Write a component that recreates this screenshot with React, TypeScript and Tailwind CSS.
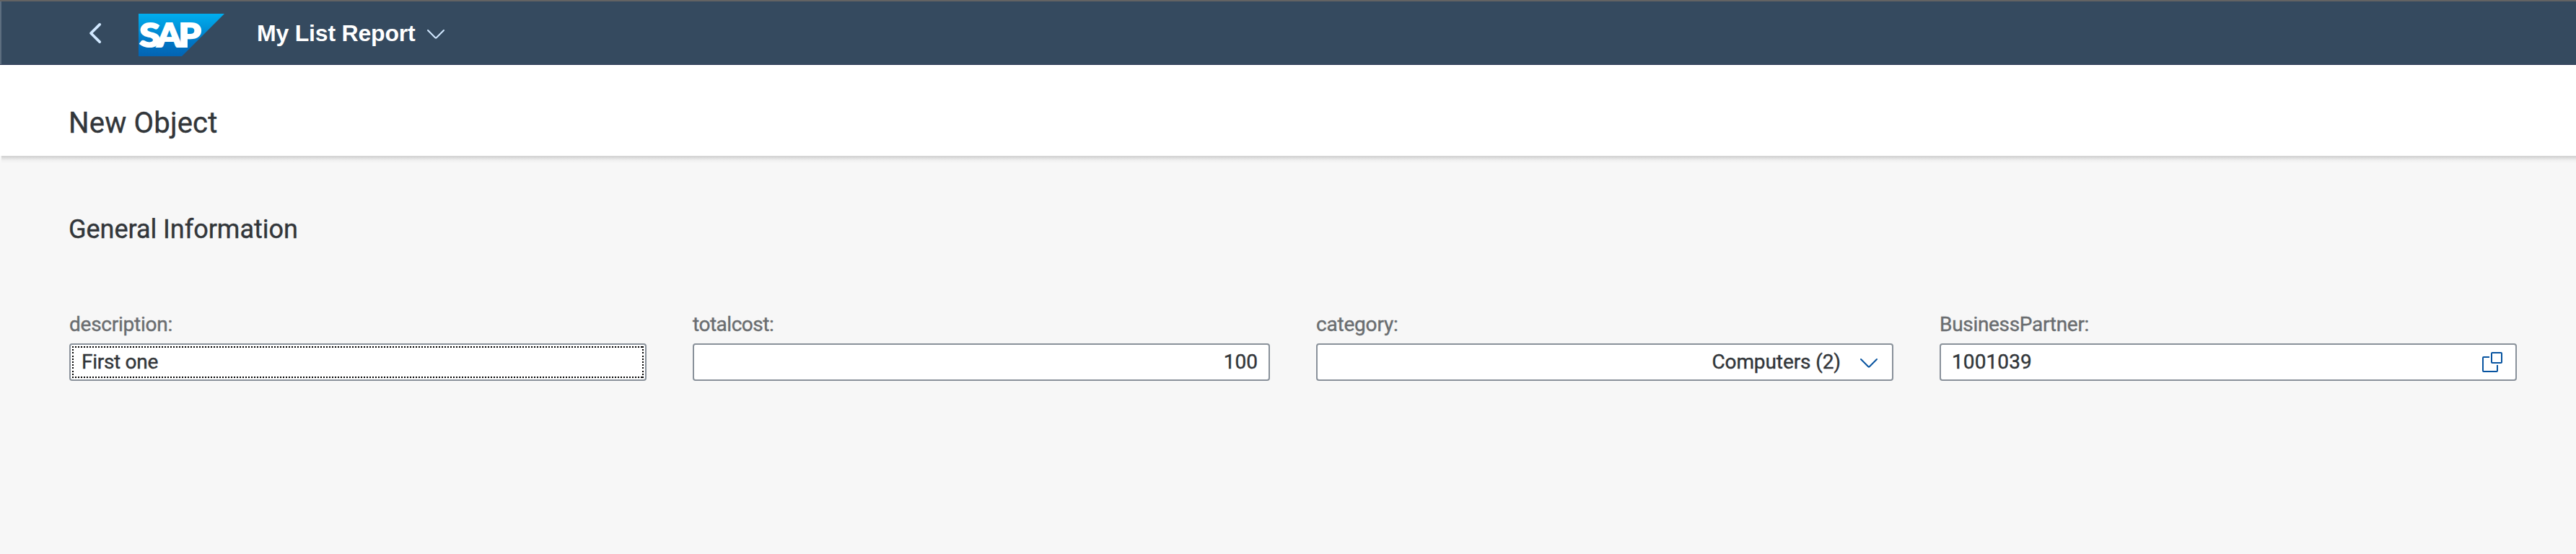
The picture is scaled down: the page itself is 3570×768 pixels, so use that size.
import type { ReactNode } from 'react';

function BackIcon() {
  return (
    <svg className="h-8 w-5" viewBox="0 0 20 32" fill="none" stroke="#d1e8ff" strokeWidth="3.8" strokeLinecap="round" strokeLinejoin="round">
      <path d="M16.2 3.9 4 16l12.2 12.1" />
    </svg>
  );
}

function ChevronDown({ color }: { color: string }) {
  return (
    <svg className="block h-4 w-6" viewBox="0 0 24 16" fill="none" stroke={color} strokeWidth="2" strokeLinecap="round" strokeLinejoin="round">
      <path d="M1 2 11.2 12.3q.8.8 1.6 0L23 2" />
    </svg>
  );
}

function ValueHelpIcon() {
  return (
    <svg className="block size-7" viewBox="0 0 28 28" fill="none" stroke="#0854a0" strokeWidth="2">
      <rect x="13" y="1" width="14" height="14" rx="1" />
      <path d="M10 7H2Q1 7 1 8V26Q1 27 2 27H20Q21 27 21 26V18" />
    </svg>
  );
}

function SapLogo() {
  return (
    <svg className="h-[59px] w-[119px] overflow-visible" viewBox="0 0 119 59">
      <defs>
        <linearGradient id="sap" x1="0" y1="0" x2="0" y2="1">
          <stop offset="0" stopColor="#00aeef" />
          <stop offset="0.3" stopColor="#0097dc" />
          <stop offset="0.65" stopColor="#0076c5" />
          <stop offset="1" stopColor="#0364b3" />
        </linearGradient>
      </defs>
      <path d="M0 0H119L60 59H0Z" fill="url(#sap)" />
      <g fill="#fff" stroke="#fff" strokeWidth="2" fontFamily="Lato, sans-serif" fontWeight="900" fontSize="46">
        <text x="1.2" y="46" textLength="29" lengthAdjust="spacingAndGlyphs">S</text>
        <text x="25.5" y="46" textLength="34" lengthAdjust="spacingAndGlyphs">A</text>
        <text x="55.5" y="46" textLength="31.5" lengthAdjust="spacingAndGlyphs">P</text>
      </g>
    </svg>
  );
}

function FocusOutline() {
  return (
    <svg className="absolute top-0.5 left-0.5 h-11 w-[792px]" viewBox="0 0 792 44" stroke="#000" strokeWidth="2" shapeRendering="crispEdges">
      <path d="M0 1H792M0 43H792" strokeDasharray="2 2" />
      <path d="M1 0V44M791 0V44" strokeDasharray="2 2.2" />
    </svg>
  );
}

function Field({ label, tracking, children }: { label: string; tracking: string; children: ReactNode }) {
  return (
    <div className="flex flex-col gap-2.5">
      <label className={`text-[28px] leading-[33px] text-[#6a6d70] ${tracking}`}>{label}</label>
      <div className="relative flex h-[52px] w-[800px] rounded-[4px] border-2 border-[#89919a] bg-white px-[15px] pt-[7px] text-[28px] leading-[33px]">
        {children}
      </div>
    </div>
  );
}

export default function App() {
  return (
    <div className="flex h-[768px] w-[3570px] flex-col overflow-hidden bg-[#f7f7f7] font-['Roboto','Noto_Sans',sans-serif] text-[#32363a] [-webkit-text-stroke:0.4px]">
      <header className="flex h-[90px] shrink-0 border-t-2 border-b border-t-[#636363] border-b-[#2c3a56] bg-[#354a5f] [-webkit-text-stroke:0]">
        <div className="w-0.5 bg-[#5d6e7f]" />
        <button className="mt-7 ml-[120px] h-8 w-5">
          <BackIcon />
        </button>
        <div className="mt-[17px] ml-[50px]">
          <SapLogo />
        </div>
        <h1 className="mt-[26px] ml-[45px] w-[236px] font-['Liberation_Sans',sans-serif] text-[32px] leading-9 font-bold tracking-[-0.2px] whitespace-nowrap text-white">
          My List Report
        </h1>
        <div className="mt-[38px]">
          <ChevronDown color="#d1e8ff" />
        </div>
      </header>

      <section className="h-[126px] shrink-0 bg-white pt-[57px] pl-[95px]">
        <h2 className="text-[40px] leading-[47px] tracking-[0.2px]">New Object</h2>
      </section>
      <div className="ml-0.5 h-0.5 shrink-0 bg-[#d5d5d5]" />
      <div className="ml-0.5 h-2 shrink-0 bg-linear-to-b from-[#d8d8d8] via-[#efefef] via-50% to-[#f7f7f7]" />

      <main className="px-24 pt-[71px]">
        <h3 className="-ml-px text-[36px] leading-[42px] tracking-[-0.03px]">General Information</h3>
        <div className="mt-[94px] flex gap-16">
          <Field label="description:" tracking="tracking-[-0.25px]">
            <FocusOutline />
            <span className="tracking-[-0.29px]">First one</span>
          </Field>
          <Field label="totalcost:" tracking="tracking-[-0.48px]">
            <span className="ml-auto">100</span>
          </Field>
          <Field label="category:" tracking="tracking-[-0.2px]">
            <span className="ml-auto tracking-[-0.1px]">Computers (2)</span>
            <span className="mt-[11px] mr-[5px] ml-[27px]">
              <ChevronDown color="#0854a0" />
            </span>
          </Field>
          <Field label="BusinessPartner:" tracking="tracking-[-0.31px]">
            <span className="tracking-[0.1px]">1001039</span>
            <span className="mt-[3px] mr-[3px] ml-auto">
              <ValueHelpIcon />
            </span>
          </Field>
        </div>
      </main>
    </div>
  );
}
